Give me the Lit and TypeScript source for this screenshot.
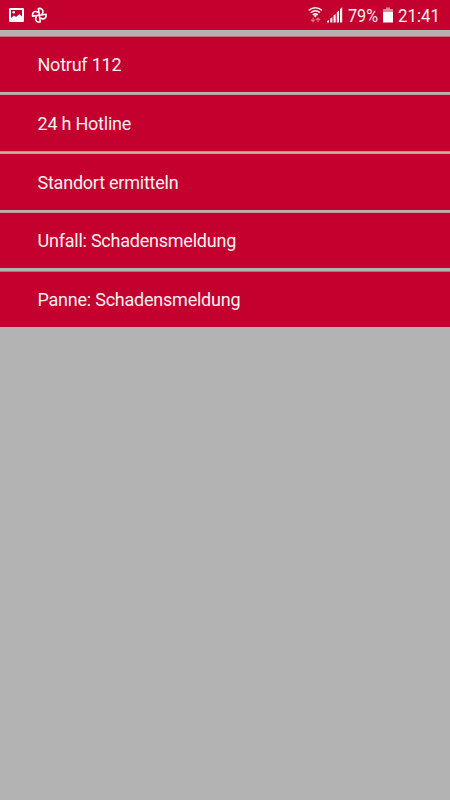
import { LitElement, html, css, svg } from "lit";
import { customElement } from "lit/decorators.js";

const ITEMS = [
  "Notruf 112",
  "24 h Hotline",
  "Standort ermitteln",
  "Unfall: Schadensmeldung",
  "Panne: Schadensmeldung",
];

@customElement("status-bar")
class StatusBar extends LitElement {
  static styles = css`
    :host {
      display: flex;
      align-items: center;
      height: 30px;
      box-sizing: border-box;
      padding: 0 10px 0 8px;
      background: #c4002f;
    }
    svg { display: block; flex: none; overflow: visible; }
    .pin { margin-left: 6px; }
    .wifi { margin-left: auto; }
    .signal { margin-left: 4px; }
    .level { margin-left: 5px; }
    .battery { margin-left: 4px; }
    .clock { margin-left: 4px; }
    text { fill: #fff2ee; font: 19px Roboto, sans-serif; }
  `;

  render() {
    return html`
      <svg width="17" height="30" viewBox="0 0 17 30">
        <path fill="#fff" fill-rule="evenodd" d="M2.3 8h12.400q1.300 0 1.300 1.300v11.400q0 1.300-1.300 1.300H2.300Q1 22 1 20.700V9.300Q1 8 2.300 8ZM3 10v8l3-2.500 2 1.500 3.500-3 2.500 2.500V10Z"/>
        <circle cx="5.700" cy="12.300" r="1.300" fill="#fff"/>
      </svg>
      <svg class="pin" width="17" height="30" viewBox="0 0 17 30">
        <g transform="translate(8.300 15.200) rotate(-8)" fill="none" stroke="#fff" stroke-width="1.600" stroke-linejoin="round">
          ${[0, 90, 180, 270].map(
            (a) => svg`<path transform="rotate(${a})" d="M0 0V-6.800C3.200-6.800 4.300-5 4.200-3.500Q4.100-1.800 2.800-.6"/>`
          )}
        </g>
      </svg>
      <svg class="wifi" width="15" height="30" viewBox="0 0 15 30">
        <g fill="none" stroke="#fff2ee" stroke-width="1.500">
          <path d="M.7 10.300Q7.300 5 14 10.300"/>
          <path d="M2.800 12.700Q7.300 8.900 11.900 12.700"/>
          <path d="M4.800 15Q7.300 12.700 9.900 15"/>
        </g>
        <path fill="#fff2ee" d="M5.700 15.700Q7.300 14.500 9 15.700L7.300 17.500Z"/>
        <path fill="none" stroke="#de7085" stroke-width="1.200" d="M5 17.500v4M3 19.700l2 2 2-2M10 22v-4M8 20l2-2 2 2"/>
      </svg>
      <svg class="signal" width="16" height="30" viewBox="0 0 16 30">
        <path fill="#fff2ee" d="M0 22.500V21l2-1v2.500ZM3.200 22.500v-4l2.200-1.300v5.300ZM6.500 22.500v-7l2.200-1.500v8.500ZM9.800 22.500V12.200l2.200-1.700v12ZM13 22.500V9l2.200-1.700v15.200Z"/>
      </svg>
      <svg class="level" width="30" height="30" viewBox="0 0 30 30">
        <text x="0" y="22.300" textLength="30" lengthAdjust="spacingAndGlyphs">79%</text>
      </svg>
      <svg class="battery" width="12" height="30" viewBox="0 0 12 30">
        <path fill="#e58596" d="M4 7.500h4V9h3v3H1V9h3Z"/>
        <path fill="#fff" d="M1 12h10v10.500H1Z"/>
      </svg>
      <svg class="clock" width="42" height="30" viewBox="0 0 42 30">
        <text x="0" y="22.300" textLength="42" lengthAdjust="spacingAndGlyphs">21:41</text>
      </svg>
    `;
  }
}

@customElement("app-root")
class AppRoot extends LitElement {
  static styles = css`
    :host {
      display: block;
      height: 800px;
      background: #b3b3b3;
    }
    .menu {
      display: grid;
      grid-template-rows: 56px 56px 56px 55px 56px;
      row-gap: 3px;
      padding-top: 6px;
    }
    .item {
      display: flex;
      align-items: center;
      box-sizing: border-box;
      padding: 1px 0 0 37.500px;
      background: #c4002f;
      color: #fff2ee;
      font: 18px/20px Roboto, sans-serif;
      letter-spacing: -0.230px;
      white-space: nowrap;
      box-shadow: 0 -1px #b99a95;
    }
    .item:first-child {
      padding-top: 0;
      border-top: 1px solid #bf7370;
      box-shadow: none;
    }
    .item:nth-child(2) { padding-top: 2px; }
    .item:nth-child(3) {
      box-shadow: 0 -1px #cda184, 0 -2px #c3b3a0, 0 -3px #d48b60;
    }
    .item:last-child {
      border-top: 1px solid #bd6b6c;
      box-shadow: none;
    }
  `;

  render() {
    return html`
      <status-bar></status-bar>
      <div class="menu">
        ${ITEMS.map((item) => html`<div class="item">${item}</div>`)}
      </div>
    `;
  }
}
